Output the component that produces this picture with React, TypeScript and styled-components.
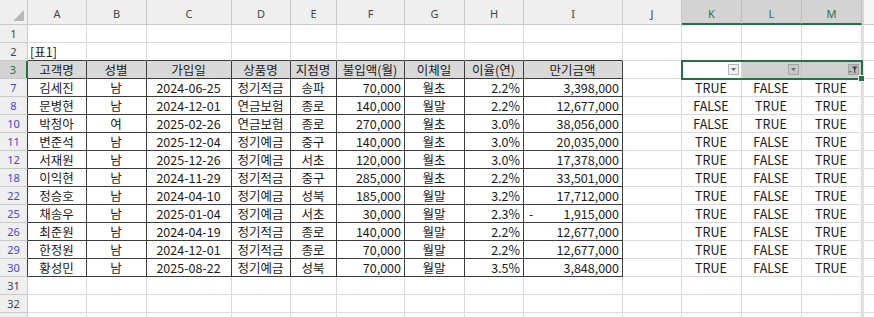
import React from 'react';
import styled, { createGlobalStyle } from 'styled-components';

const GREEN = '#217346';
const GRID = '#dadada';
const HEAD_LINE = '#c9c9c9';
const DARK = '#3c3c3c';
const CELL_FONT = `"Noto Sans CJK KR", "Noto Sans", sans-serif`;
const HEAD_FONT = `"Noto Sans", "Liberation Sans", sans-serif`;

// widths of: row heading, A..M, and the clipped column after M
const COL_WIDTHS = [28, 59, 60, 85, 59, 46, 68, 60, 59, 99, 59, 60, 60, 60, 40];
const LETTERS = ['A', 'B', 'C', 'D', 'E', 'F', 'G', 'H', 'I', 'J', 'K', 'L', 'M', ''];
const SELECTED_COLS = ['K', 'L', 'M'];

type Align = 'left' | 'center' | 'right';

const HEADERS = ['고객명', '성별', '가입일', '상품명', '지점명', '불입액(월)', '이체일', '이율(연)', '만기금액'];
const ALIGNS: Align[] = ['center', 'center', 'center', 'center', 'center', 'right', 'center', 'right', 'right'];

interface DataRow {
  n: number;
  values: string[];
  flags: string[];
}

const ROWS: DataRow[] = [
  { n: 7, values: ['김세진', '남', '2024-06-25', '정기적금', '송파', '70,000', '월초', '2.2%', '3,398,000'], flags: ['TRUE', 'FALSE', 'TRUE'] },
  { n: 8, values: ['문병현', '남', '2024-12-01', '연금보험', '종로', '140,000', '월말', '2.2%', '12,677,000'], flags: ['FALSE', 'TRUE', 'TRUE'] },
  { n: 10, values: ['박청아', '여', '2025-02-26', '연금보험', '종로', '270,000', '월초', '3.0%', '38,056,000'], flags: ['FALSE', 'TRUE', 'TRUE'] },
  { n: 11, values: ['변준석', '남', '2025-12-04', '정기예금', '중구', '140,000', '월초', '3.0%', '20,035,000'], flags: ['TRUE', 'FALSE', 'TRUE'] },
  { n: 12, values: ['서재원', '남', '2025-12-26', '정기예금', '서초', '120,000', '월초', '3.0%', '17,378,000'], flags: ['TRUE', 'FALSE', 'TRUE'] },
  { n: 18, values: ['이익현', '남', '2024-11-29', '정기적금', '중구', '285,000', '월초', '2.2%', '33,501,000'], flags: ['TRUE', 'FALSE', 'TRUE'] },
  { n: 22, values: ['정승호', '남', '2024-04-10', '정기예금', '성북', '185,000', '월말', '3.2%', '17,712,000'], flags: ['TRUE', 'FALSE', 'TRUE'] },
  { n: 25, values: ['채송우', '남', '2025-01-04', '정기예금', '서초', '30,000', '월말', '2.3%', '-1,915,000'], flags: ['TRUE', 'FALSE', 'TRUE'] },
  { n: 26, values: ['최준원', '남', '2024-04-19', '정기적금', '종로', '140,000', '월말', '2.2%', '12,677,000'], flags: ['TRUE', 'FALSE', 'TRUE'] },
  { n: 29, values: ['한정원', '남', '2024-12-01', '정기적금', '종로', '70,000', '월말', '2.2%', '12,677,000'], flags: ['TRUE', 'FALSE', 'TRUE'] },
  { n: 30, values: ['황성민', '남', '2025-08-22', '정기예금', '성북', '70,000', '월말', '3.5%', '3,848,000'], flags: ['TRUE', 'FALSE', 'TRUE'] },
];

const GlobalStyle = createGlobalStyle`
  html, body {
    margin: 0;
    padding: 0;
    background: #ffffff;
    overflow: hidden;
  }
`;

const Sheet = styled.div`
  display: grid;
  grid-template-columns: ${COL_WIDTHS.map((w) => `${w}px`).join(' ')};
  grid-template-rows: 25px;
  grid-auto-rows: 18px;
  width: 874px;
  height: 317px;
  overflow: hidden;
  background: #ffffff;
`;

const Corner = styled.div`
  position: relative;
  background: #efefef;
  border-right: 1px solid ${HEAD_LINE};
  border-bottom: 1px solid ${HEAD_LINE};
  box-sizing: border-box;

  &::after {
    content: '';
    position: absolute;
    right: 3px;
    bottom: 3px;
    width: 0;
    height: 0;
    border-left: 11px solid transparent;
    border-bottom: 11px solid #b9b9b9;
  }
`;

const ColHead = styled.div<{ $selected?: boolean; $edge?: boolean }>`
  display: flex;
  align-items: center;
  justify-content: center;
  box-sizing: border-box;
  padding-top: 3px;
  background: ${({ $selected, $edge }) => ($selected ? '#d3d3d3' : $edge ? '#f6f6f6' : '#efefef')};
  color: ${({ $selected }) => ($selected ? GREEN : '#444444')};
  border-left: ${({ $edge }) => ($edge ? '2px solid #d8d8d8' : 'none')};
  border-right: 1px solid ${({ $selected }) => ($selected ? '#bdbdbd' : HEAD_LINE)};
  border-bottom: ${({ $selected }) => ($selected ? `2px solid ${GREEN}` : `1px solid ${HEAD_LINE}`)};
  font-family: ${HEAD_FONT};
  font-size: 11px;
`;

type RowState = 'plain' | 'selected' | 'filtered';

const RowHead = styled.div<{ $state: RowState; $darkRight?: boolean }>`
  display: flex;
  align-items: center;
  justify-content: center;
  box-sizing: border-box;
  background: ${({ $state }) => ($state === 'selected' ? '#d3d3d3' : '#efefef')};
  color: ${({ $state }) =>
    $state === 'selected' ? GREEN : $state === 'filtered' ? '#4848d8' : '#444444'};
  border-right: ${({ $state, $darkRight }) =>
    $state === 'selected'
      ? `2px solid ${GREEN}`
      : `1px solid ${$darkRight ? DARK : HEAD_LINE}`};
  border-bottom: 1px solid ${HEAD_LINE};
  font-family: ${HEAD_FONT};
  font-size: 11px;
`;

const Cell = styled.div<{
  $align?: Align | 'split';
  $table?: boolean;
  $head?: boolean;
  $darkBottom?: boolean;
}>`
  display: flex;
  align-items: center;
  justify-content: ${({ $align }) =>
    $align === 'right'
      ? 'flex-end'
      : $align === 'center'
      ? 'center'
      : $align === 'split'
      ? 'space-between'
      : 'flex-start'};
  box-sizing: border-box;
  padding: 0 3px 0 2px;
  overflow: hidden;
  white-space: nowrap;
  background: ${({ $head }) => ($head ? '#d9d9d9' : 'transparent')};
  border-right: 1px solid ${({ $table }) => ($table ? DARK : GRID)};
  border-bottom: 1px solid ${({ $table, $darkBottom }) => ($table || $darkBottom ? DARK : GRID)};
  color: #1a1a1a;
  font-family: ${CELL_FONT};
  font-size: 12.5px;
  line-height: 17px;
`;

const EdgeCell = styled.div`
  box-sizing: border-box;
  border-left: 2px solid #e2e2e2;
  border-bottom: 1px solid ${GRID};
`;

const FilterGroup = styled.div`
  grid-column: span 3;
  position: relative;
  display: grid;
  grid-template-columns: 60px 60px 60px;
  outline: 2px solid ${GREEN};
  outline-offset: -1px;
  z-index: 1;
`;

const FillHandle = styled.div`
  position: absolute;
  right: -3px;
  bottom: -3px;
  width: 5px;
  height: 5px;
  background: ${GREEN};
  border: 1px solid #ffffff;
`;

const FilterCell = styled.div<{ $active?: boolean }>`
  display: flex;
  align-items: center;
  justify-content: flex-end;
  box-sizing: border-box;
  padding-right: 2px;
  background: ${({ $active }) => ($active ? '#ffffff' : '#d0d0d0')};
  border-right: 1px solid ${({ $active }) => ($active ? GRID : '#c4c4c4')};
  border-bottom: 1px solid ${GRID};
`;

const DropButton = styled.div<{ $shaded?: boolean; $applied?: boolean }>`
  display: flex;
  align-items: center;
  justify-content: center;
  box-sizing: border-box;
  width: 11px;
  height: 11px;
  background: ${({ $shaded, $applied }) => ($applied ? '#bcbcbc' : $shaded ? '#c8c8c8' : '#f1f1f1')};
  border: 1px solid ${({ $shaded }) => ($shaded ? '#a2a2a2' : '#b6b6b6')};
`;

const Arrow = () => (
  <svg width="5" height="3" viewBox="0 0 5 3">
    <path d="M0 0 H5 L2.5 3 Z" fill="#6a6a6a" />
  </svg>
);

const Funnel = () => (
  <svg width="9" height="8" viewBox="0 0 9 8">
    <path d="M3 0.5 H8.5 L6.3 3.3 V7.5 L5.2 6.8 V3.3 Z" fill="#3c3c3c" />
    <path d="M0 5.2 H2.6 L1.3 6.8 Z" fill="#3c3c3c" />
  </svg>
);

const Sign = styled.span`
  padding-left: 3px;
`;

const blanks = (from: number, to: number) =>
  LETTERS.slice(from, to).map((l) => <Cell key={l} />);

const App: React.FC = () => {
  return (
    <>
      <GlobalStyle />
      <Sheet>
        <Corner />
        {LETTERS.map((l, i) => (
          <ColHead key={i} $selected={SELECTED_COLS.includes(l)} $edge={l === ''}>
            {l}
          </ColHead>
        ))}

        <RowHead $state="plain">1</RowHead>
        {blanks(0, 13)}
        <EdgeCell />

        <RowHead $state="plain">2</RowHead>
        <Cell $darkBottom>[표1]</Cell>
        {LETTERS.slice(1, 9).map((l) => (
          <Cell key={l} $darkBottom />
        ))}
        {blanks(9, 13)}
        <EdgeCell />

        <RowHead $state="selected">3</RowHead>
        {HEADERS.map((h) => (
          <Cell key={h} $table $head $align="center">
            {h}
          </Cell>
        ))}
        <Cell />
        <FilterGroup>
          <FilterCell $active>
            <DropButton>
              <Arrow />
            </DropButton>
          </FilterCell>
          <FilterCell>
            <DropButton $shaded>
              <Arrow />
            </DropButton>
          </FilterCell>
          <FilterCell>
            <DropButton $shaded $applied>
              <Funnel />
            </DropButton>
          </FilterCell>
          <FillHandle />
        </FilterGroup>
        <EdgeCell />

        {ROWS.map((row) => (
          <React.Fragment key={row.n}>
            <RowHead $state="filtered" $darkRight>
              {row.n}
            </RowHead>
            {row.values.map((v, i) =>
              v.startsWith('-') ? (
                <Cell key={i} $table $align="split">
                  <Sign>-</Sign>
                  <span>{v.slice(1)}</span>
                </Cell>
              ) : (
                <Cell key={i} $table $align={ALIGNS[i]}>
                  {v}
                </Cell>
              )
            )}
            <Cell />
            {row.flags.map((f, i) => (
              <Cell key={`f${i}`} $align="center">
                {f}
              </Cell>
            ))}
            <EdgeCell />
          </React.Fragment>
        ))}

        {[31, 32].map((n) => (
          <React.Fragment key={n}>
            <RowHead $state="plain">{n}</RowHead>
            {blanks(0, 13)}
            <EdgeCell />
          </React.Fragment>
        ))}
        <RowHead $state="plain" />
        {blanks(0, 13)}
        <EdgeCell />
      </Sheet>
    </>
  );
};

export default App;
